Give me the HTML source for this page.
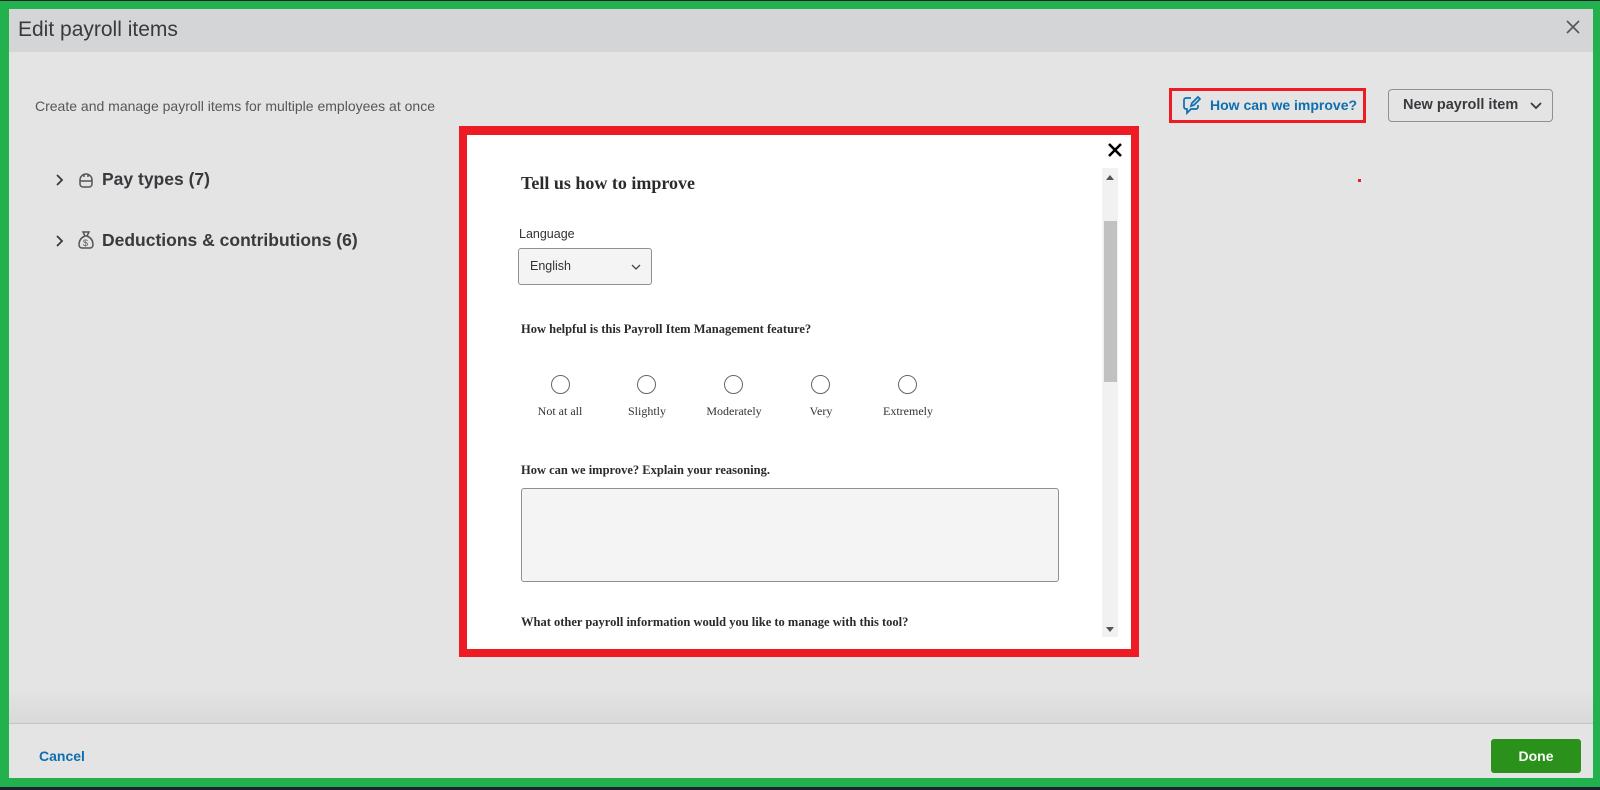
<!DOCTYPE html>
<html><head><meta charset="utf-8"><style>
*{margin:0;padding:0;box-sizing:border-box}
html,body{width:1600px;height:790px;overflow:hidden;background:#1a2230;font-family:"Liberation Sans",sans-serif}
#frame{position:absolute;left:0;top:1px;width:1600px;height:786px;background:#22b14c}
#dlg{position:absolute;left:9px;top:9px;width:1584px;height:769px;background:#e4e4e4}
#hdr{position:absolute;left:0;top:0;width:1584px;height:43px;background:#d4d5d7}
#hdr h1{position:absolute;left:9px;top:9px;font-size:21px;font-weight:normal;color:#393a3d}
.abs{position:absolute}
#sub{left:26px;top:89px;font-size:14px;color:#55575b}
.sec{font-size:17.5px;font-weight:bold;color:#393a3d}
#foot{position:absolute;left:0;top:714px;width:1584px;height:55px;border-top:1px solid #c4c4c4;background:#e4e4e4}
#grad{position:absolute;left:0;top:679px;width:1584px;height:35px;background:linear-gradient(#e4e4e4,#d9d9d9)}
#modal{position:absolute;left:459px;top:126px;width:680px;height:531px;background:#ed1c24}
#mi{position:absolute;left:8px;top:9px;width:664px;height:514px;background:#fff;font-family:"Liberation Serif",serif;color:#393a3d;overflow:hidden}
.q{position:absolute;left:54px;font-size:12.5px;font-weight:bold;color:#2b2b2b}
.r{position:absolute;top:240px;width:19px;height:19px;border:1px solid #666;border-radius:50%}
.rl{position:absolute;top:269px;font-size:12px;width:90px;text-align:center;color:#333}
</style></head><body>
<div id="frame"></div>
<div id="dlg">
 <div id="hdr"><h1>Edit payroll items</h1>
  <svg class="abs" style="left:1557px;top:11px" width="14" height="14" viewBox="0 0 14 14"><path d="M1 1L13 13M13 1L1 13" stroke="#555" stroke-width="1.6"/></svg>
 </div>
 <div id="sub" class="abs">Create and manage payroll items for multiple employees at once</div>
 <div class="abs" style="left:1160px;top:79px;width:197px;height:35px;border:3px solid #ed1c24"></div>
 <svg class="abs" style="left:1173px;top:86px" width="20" height="20" viewBox="0 0 20 20" fill="none" stroke="#0d6fb0" stroke-width="1.7"><path d="M9 3H4a2 2 0 0 0-2 2v7a2 2 0 0 0 2 2h1v4l4-4h5a2 2 0 0 0 2-2V10"/><path d="M9 11l1-3 6-6 2 2-6 6z"/></svg>
 <div class="abs" style="left:1201px;top:88px;font-size:14px;font-weight:bold;color:#0d6fb0">How can we improve?</div>
 <div class="abs" style="left:1379px;top:80px;width:165px;height:33px;border:1px solid #8d9096;border-radius:4px"></div>
 <div class="abs" style="left:1394px;top:88px;font-size:14.5px;font-weight:bold;color:#393a3d">New payroll item</div>
 <svg class="abs" style="left:1520px;top:92px" width="14" height="10" viewBox="0 0 14 10"><path d="M2 2l5 5 5-5" stroke="#393a3d" stroke-width="1.8" fill="none"/></svg>
 <div class="abs" style="left:1349px;top:170px;width:3px;height:3px;background:#ed1c24"></div>

 <svg class="abs" style="left:46px;top:164px" width="10" height="14" viewBox="0 0 10 14"><path d="M2 2l5 5-5 5" stroke="#393a3d" stroke-width="1.8" fill="none"/></svg>
 <svg class="abs" style="left:68px;top:162px" width="18" height="18" viewBox="0 0 18 18" fill="none" stroke="#555" stroke-width="1.5"><path d="M3 9a6 6 0 0 1 12 0v4a3 3 0 0 1-3 3H6a3 3 0 0 1-3-3z M3 10h12 M7 3v3 M11 3v3"/></svg>
 <div class="abs sec" style="left:93px;top:160px">Pay types (7)</div>
 <svg class="abs" style="left:46px;top:225px" width="10" height="14" viewBox="0 0 10 14"><path d="M2 2l5 5-5 5" stroke="#393a3d" stroke-width="1.8" fill="none"/></svg>
 <svg class="abs" style="left:68px;top:221px" width="18" height="20" viewBox="0 0 18 20" fill="none" stroke="#555" stroke-width="1.5"><path d="M6 2h6l-2 4h-2z M8 6C3 8 2 12 2 15a3 3 0 0 0 3 3h8a3 3 0 0 0 3-3c0-3-1-7-6-9z"/><text x="6" y="16" font-size="9" fill="#555" stroke="none" font-family="Liberation Sans">$</text></svg>
 <div class="abs sec" style="left:93px;top:221px">Deductions &amp; contributions (6)</div>

 <div id="grad"></div>
 <div id="foot">
  <div class="abs" style="left:30px;top:24px;font-size:14px;font-weight:bold;color:#0d6fb0">Cancel</div>
  <div class="abs" style="left:1482px;top:15px;width:90px;height:34px;background:#2a911b;border-radius:3px;color:#fff;font-size:14px;font-weight:bold;text-align:center;line-height:34px">Done</div>
 </div>
</div>

<div id="modal"><div id="mi">
 <svg class="abs" style="left:641px;top:8px" width="14" height="14" viewBox="0 0 14 14"><path d="M1 1L13 13M13 1L1 13" stroke="#000" stroke-width="2.6"/></svg>
 <div class="abs" style="left:635px;top:33px;width:16px;height:469px;background:#f1f1f1"></div>
 <div class="abs" style="left:637px;top:86px;width:13px;height:161px;background:#c1c1c1"></div>
 <div class="abs" style="left:639px;top:40px;width:0;height:0;border-left:4px solid transparent;border-right:4px solid transparent;border-bottom:5px solid #555"></div>
 <div class="abs" style="left:639px;top:492px;width:0;height:0;border-left:4px solid transparent;border-right:4px solid transparent;border-top:5px solid #555"></div>
 <div class="abs" style="left:54px;top:38px;font-size:18px;font-weight:bold;color:#2b2b2b">Tell us how to improve</div>
 <div class="abs" style="left:52px;top:92px;font-size:12.5px;font-family:'Liberation Sans',sans-serif;color:#333">Language</div>
 <div class="abs" style="left:51px;top:113px;width:134px;height:37px;border:1px solid #8d9096;border-radius:3px;background:#f4f4f4"></div>
 <div class="abs" style="left:63px;top:124px;font-size:12.5px;font-family:'Liberation Sans',sans-serif;color:#333">English</div>
 <svg class="abs" style="left:164px;top:128px" width="10" height="8" viewBox="0 0 10 8"><path d="M1 2l4 4 4-4" stroke="#444" stroke-width="1.3" fill="none"/></svg>
 <div class="q" style="top:187px">How helpful is this Payroll Item Management feature?</div>
 <div class="r" style="left:84px"></div><div class="r" style="left:170px"></div><div class="r" style="left:257px"></div><div class="r" style="left:344px"></div><div class="r" style="left:431px"></div>
 <div class="rl" style="left:48px">Not at all</div><div class="rl" style="left:135px">Slightly</div><div class="rl" style="left:222px">Moderately</div><div class="rl" style="left:309px">Very</div><div class="rl" style="left:396px">Extremely</div>
 <div class="q" style="top:328px">How can we improve? Explain your reasoning.</div>
 <div class="abs" style="left:54px;top:353px;width:538px;height:94px;border:1px solid #8d9096;border-radius:3px;background:#f4f4f4"></div>
 <div class="q" style="top:480px">What other payroll information would you like to manage with this tool?</div>
</div></div>
</body></html>
